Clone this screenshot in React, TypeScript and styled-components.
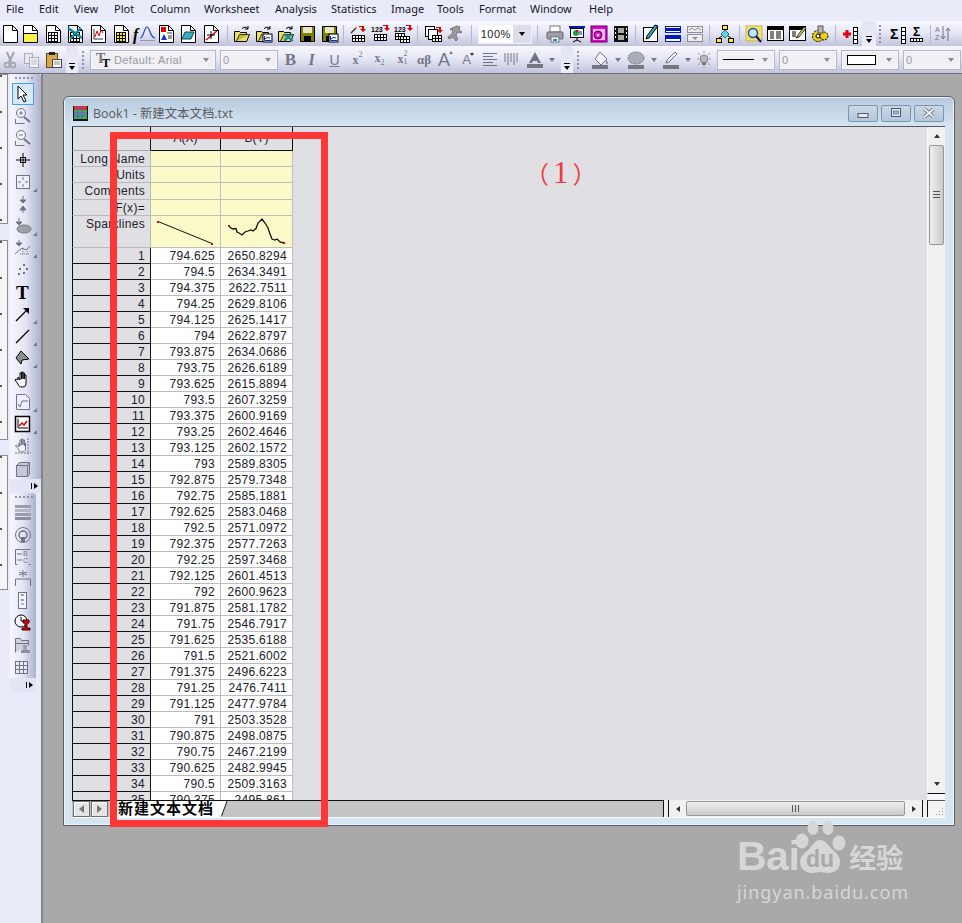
import React from "react";
import styled, { createGlobalStyle } from "styled-components";

const GlobalStyle = createGlobalStyle`
  html, body { margin: 0; padding: 0; background: #a9a9a9; }
  #root { width: 962px; height: 923px; overflow: hidden; }
  * { box-sizing: border-box; }
`;

const Page = styled.div`
  position: relative;
  width: 962px;
  height: 923px;
  display: flex;
  flex-direction: column;
  font-family: "Liberation Sans", "Noto Sans CJK SC", sans-serif;
  overflow: hidden;
`;

/* ---------- small svg helpers ---------- */
const Cells = ({ x, y, c, r, s = 3, fill = "#fff", line = "#000" }: any) => {
  const w = c * (s + 1);
  const h = r * (s + 1);
  let d = "";
  for (let i = 0; i <= c; i++) d += `M${x + i * (s + 1) + 0.5} ${y}v${h + 1}`;
  for (let i = 0; i <= r; i++) d += `M${x} ${y + i * (s + 1) + 0.5}h${w + 1}`;
  return (
    <>
      <rect x={x} y={y} width={w} height={h} fill={fill} />
      <path d={d} stroke={line} fill="none" />
    </>
  );
};
const Sheet = ({ children }: any) => (
  <>
    <path d="M1.5 .5h9l5 5v12h-14z" fill="#fff" stroke="#000" />
    <path d="M10.5 .5v5h5" fill="none" stroke="#000" />
    {children}
  </>
);
const Folder = ({ children }: any) => (
  <>
    <path d="M1.5 6.5v10h12l3-7h-3v-2h-6l-1-1z" fill="#e8e06a" stroke="#000" />
    <path d="M3.5 16l3-6.5h10" fill="#c8b838" stroke="#333" />
    <path d="M9 3.5q3-3 6 0M15 1v3h-3" fill="none" stroke="#000" />
    {children}
  </>
);
const Floppy = ({ children }: any) => (
  <>
    <path d="M1.5 1.5h14v15h-14z" fill="#808000" stroke="#000" />
    <rect x="4" y="2" width="9" height="6" fill="#e8e8c8" />
    <rect x="5" y="11" width="7" height="5" fill="#000" />
    {children}
  </>
);
const Bars = ({ x = 12 }: any) => <Cells x={x} y={2} c={1} r={4} s={3} />;
const Xmark = () => (
  <path d="M1 3l14 10M14 3L3 14" stroke="#108a9e" strokeWidth="2.4" fill="none" />
);
const Grp = ({ x = 8, y = 9 }: any) => (
  <>
    <rect x={x} y={y} width={9} height={8} fill="#fff" stroke="#000" />
    <path d={`M${x + 1.5} ${y + 2}v4.5h6.5`} stroke="#0030c0" fill="none" />
    <path d={`M${x + 2} ${y + 5}l2-1.5 3 0.5`} stroke="#0030c0" fill="none" />
  </>
);
const RedArrow = ({ x = 11, y = 3 }: any) => (
  <path d={`M${x - 3} ${y}h5v3h2l-3 3-3-3h2v-2h-3z`} fill="#e00000" />
);
const SmallT = styled.text`
  font-family: "Liberation Sans", sans-serif;
`;
const SerifT = styled.text`
  font-family: "Liberation Serif", serif;
`;

const g = "#6e7488";

const icons: Record<string, React.ReactNode> = {
  new: <Sheet />,
  book: <Sheet><rect x="2" y="9" width="13" height="8" fill="#fff04a" /><path d="M2 8.500h13" stroke="#000" /></Sheet>,
  wks: <Sheet><Cells x={3} y={7} c={3} r={3} s={2} /></Sheet>,
  xls: <Sheet><Cells x={3} y={7} c={3} r={3} s={2} /><Xmark /></Sheet>,
  graph: <Sheet><path d="M4 4v10h9" stroke="#333" fill="none" /><path d="M5 12l2-6 2 5 2-6 2 3" stroke="#e00000" fill="none" /></Sheet>,
  matrix: <Sheet><Cells x={3} y={7} c={3} r={3} s={2} fill="#fff000" /></Sheet>,
  fx: (
    <>
      <SerifT x="-2" y="15" fontSize="16" fontStyle="italic" fontWeight="700">f</SerifT>
      <path d="M5 13c4 0 4-11 7-11s3 11 8 11" stroke="#2040d0" strokeWidth="1.2" fill="none" />
      <path d="M5 15.500h15" stroke="#999" />
    </>
  ),
  report: <Sheet><rect x="3" y="2" width="5" height="5" fill="#e00000" /><path d="M3 15l3-6 3 6z" fill="#0040d0" /><path d="M9 8h5M10 11h4M10 13h4" stroke="#333" /></Sheet>,
  note: <Sheet><path d="M5 7h9l-3 7H2z" fill="#38b0c0" stroke="#104858" /></Sheet>,
  layout: <Sheet><path d="M3 15L14 6" stroke="#e00000" strokeWidth="1.5" /><path d="M8 6v8M4 10h8" stroke="#000" /></Sheet>,
  open: <Folder />,
  openT: <Folder><Grp /></Folder>,
  openX: <Folder><path d="M7 9l9 7M15 9l-8 7" stroke="#108a9e" strokeWidth="2.2" /></Folder>,
  save: <Floppy />,
  saveT: <Floppy><Grp /></Floppy>,
  wand: <><path d="M2 8l5-5" stroke="#333" strokeWidth="1.5" /><path d="M6 1l3 2-2 1z" fill="#e8c000" /><RedArrow x={13} y={1} /><Cells x={3} y={10} c={4} r={2} s={2} /></>,
  n123: <><SmallT x="0" y="7" fontSize="7" fontWeight="700">123</SmallT><RedArrow x={15} y={0} /><Cells x={3} y={9} c={4} r={2} s={2} /></>,
  n123m: <><SmallT x="0" y="7" fontSize="7" fontWeight="700">123</SmallT><RedArrow x={15} y={0} /><Cells x={1} y={8} c={3} r={2} s={2} /><Cells x={6} y={11} c={3} r={2} s={2} /></>,
  dup: <><rect x="1.500" y="1.500" width="9" height="10" fill="#fff" stroke="#000" /><rect x="4.500" y="4.500" width="9" height="10" fill="#fff" stroke="#000" /><RedArrow x={15} y={2} /><Cells x={8} y={10} c={3} r={2} s={2} /></>,
  run: <path d="M11 1l3 1-1 3 3 2-1 1-4-1-1 4 2 3-2 2-3-4-4 2-1-2 4-3 1-5-2 1-1-1z" fill="#9a9aa0" stroke="#777" />,
  print: <><rect x="4" y="1" width="10" height="6" fill="#fff" stroke="#777" /><rect x="1" y="7" width="16" height="7" rx="1" fill="#9ba0a8" stroke="#666" /><rect x="5" y="12" width="8" height="5" fill="#fff" stroke="#777" /><rect x="7" y="14" width="4" height="2" fill="#1090d0" /></>,
  present: <><rect x="1" y="1" width="16" height="2" fill="#0018c0" /><rect x="2.500" y="3.500" width="13" height="9" fill="#fff" stroke="#000" /><circle cx="8" cy="8" r="3" fill="#20a040" /><path d="M8 8V5h3z" fill="#e00000" /><path d="M11 9h3M11 7h3" stroke="#0018c0" /><path d="M9 13v2M5 17l4-2 4 2" stroke="#000" fill="none" /></>,
  cam: <><rect x="1" y="1" width="16" height="16" fill="#e000c8" stroke="#600060" /><rect x="3" y="4" width="12" height="11" fill="#f4c0e8" /><circle cx="8" cy="10" r="4" fill="#e000c8" stroke="#600060" /><circle cx="8" cy="10" r="1.500" fill="#fff" /></>,
  film: <><rect x="2" y="1" width="14" height="16" fill="#111" /><rect x="6" y="3" width="6" height="5" fill="#aaa" /><rect x="6" y="10" width="6" height="5" fill="#aaa" /><path d="M3.500 3v12M14.500 3v12" stroke="#fff" strokeDasharray="2 2" /></>,
  pen: <><rect x="1.500" y="2.500" width="14" height="14" fill="#fff" stroke="#000" /><path d="M4 14l3-1 9-12-3-1-8 11z" fill="#28a8c0" stroke="#000" /></>,
  bars: <><rect x="1.500" y="1.500" width="15" height="6" fill="#fff" stroke="#0018c0" /><rect x="1" y="3" width="16" height="3" fill="#0018c0" /><rect x="1.500" y="10.500" width="15" height="6" fill="#fff" stroke="#0018c0" /><rect x="1" y="11" width="16" height="3" fill="#0018c0" /></>,
  barsG: <><rect x="1.500" y="1.500" width="15" height="6" fill="#eee" stroke="#8a8f9a" /><path d="M3 5l3-2 3 2 3-2 3 2" stroke="#8a8f9a" fill="none" /><rect x="1.500" y="9.500" width="15" height="7" fill="#eee" stroke="#8a8f9a" /><path d="M6 12l3 3 3-3z" fill="#8a8f9a" /></>,
  tree: <><rect x="6.500" y=".5" width="5" height="4" fill="#fff000" stroke="#000" /><rect x=".5" y="13.500" width="5" height="4" fill="#fff000" stroke="#000" /><rect x="12.500" y="13.500" width="5" height="4" fill="#fff000" stroke="#000" /><path d="M9 4v2M6 11l-3 2M12 11l3 2" stroke="#000" /><path d="M9 5l4 4-4 4-4-4z" fill="#60d8e8" stroke="#206878" /></>,
  mag: <><rect x="1" y="1" width="16" height="15" fill="#f0e070" stroke="#c8b838" /><circle cx="8" cy="8" r="4.500" fill="#c0e8f0" stroke="#2050a0" strokeWidth="1.400" /><path d="M11 11l5 6" stroke="#101080" strokeWidth="2" /></>,
  table: <><rect x=".5" y="1.500" width="16" height="14" fill="#fff" stroke="#000" /><rect x="1" y="2" width="15" height="3" fill="#000" /><path d="M3 7h4M9 7h5M3 9h4M9 9h5M3 11h4M9 11h5M3 13h4M9 13h5" stroke="#000" /></>,
  tablePen: <><rect x=".5" y="1.500" width="16" height="14" fill="#fff" stroke="#000" /><rect x="1" y="2" width="15" height="3" fill="#000" /><path d="M3 7h4M3 9h4M3 11h4" stroke="#000" /><path d="M7 13l2-3 6-8 2 1-7 9z" fill="#e8d040" stroke="#333" /></>,
  gear: <><circle cx="7" cy="11" r="5.500" fill="#e8d020" stroke="#000" strokeDasharray="2 1" /><circle cx="7" cy="11" r="2" fill="#fff" stroke="#000" /><circle cx="13" cy="11" r="4" fill="#e8d020" stroke="#000" strokeDasharray="2 1" /><rect x="7" y="1" width="5" height="7" fill="#b8b8b8" stroke="#555" /></>,
  plusBars: <><path d="M1 9h8M5 5v8" stroke="#e00010" strokeWidth="3" /><Bars x={11} /></>,
  sigmaBars: <><SmallT x="0" y="14" fontSize="14" fontWeight="700">Σ</SmallT><Bars x={11} /></>,
  sigmaLine: <><SmallT x="4" y="11" fontSize="12" fontWeight="700">Σ</SmallT><Cells x={1} y={13} c={4} r={1} s={2} /></>,
  sort: <><SmallT x="1" y="7" fontSize="7" fill={g}>A</SmallT><SmallT x="1" y="15" fontSize="7" fill={g}>Z</SmallT><path d="M9 1v13M7 11l2 3 2-3" stroke={g} fill="none" /><path d="M14 16V3M12 6l2-3 2 3" stroke={g} fill="none" /></>,
  cut: <><path d="M5 1l4 10M12 1L7 11" stroke="#a0a3ae" strokeWidth="2" /><circle cx="5" cy="14" r="2.500" fill="none" stroke="#a0a3ae" strokeWidth="1.500" /><circle cx="11" cy="14" r="2.500" fill="none" stroke="#a0a3ae" strokeWidth="1.500" /></>,
  copy: <><rect x="1.500" y="2.500" width="8" height="10" fill="#e6e7ef" stroke="#a8abb8" /><rect x="6.500" y="6.500" width="9" height="10" fill="#f2f3f8" stroke="#a8abb8" /><path d="M8 9h6M8 11h6M8 13h6" stroke="#b8bac6" /></>,
  paste: <><rect x="1.500" y="2.500" width="11" height="14" fill="#d8a848" stroke="#5a4a28" /><rect x="4" y="1" width="6" height="3" fill="#222" /><rect x="7.500" y="8.500" width="9" height="8" fill="#fff" stroke="#445" /><path d="M9 11h6M9 13h6" stroke="#889" /></>,
  fontT: <><SerifT x="0" y="12" fontSize="14" fontWeight="700" fill="#777">T</SerifT><SerifT x="6" y="16" fontSize="12" fontWeight="700" fill="#000">T</SerifT></>,
  alignL: <path d="M1 2.500h14M1 5.500h10M1 8.500h14M1 11.500h10M1 14.500h14" stroke={g} fill="none" />,
  colL: <path d="M2 2v9M5 2v12M8 2v9M11 2v12M14 2v9" stroke={g} fill="none" />,
  fontCol: <><path d="M8 1l6 11h-3l-1-2H6l-1 2H2z" fill={g} /><rect x="0" y="13" width="16" height="4" fill="#77777f" /></>,
  bucket: <><path d="M8 1l7 7-6 6-6-6z" fill="#f4f4f8" stroke={g} /><path d="M14 9c2 2 2 4 1 4s-1-2-1-4z" fill={g} /><rect x="0" y="14" width="16" height="4" fill="#77777f" /></>,
  palette: <><ellipse cx="8" cy="7" rx="8" ry="6" fill="#a8acb8" stroke="#777" strokeDasharray="2 1" /><rect x="0" y="14" width="16" height="4" fill="#77777f" /></>,
  pencil: <><path d="M3 12l1-3 8-8 2 2-8 8z" fill="#eee" stroke={g} /><rect x="0" y="14" width="16" height="4" fill="#77777f" /></>,
  bulb: <><circle cx="9" cy="8" r="4" fill="#b4b6c2" stroke="#888" /><rect x="7" y="11" width="4" height="3" fill="#777" /><path d="M9 0v2M2 8h2M14 8h2M3 2l2 2M15 2l-2 2M3 14l2-2M15 14l-2-2M9 15v2" stroke="#999" /></>,
  /* left tools */
  pointer: <path d="M4 1v13l3-3 3 6 2-1-3-6h4z" fill="#fff" stroke="#000" />,
  zoomIn: <><circle cx="7" cy="6" r="4.500" fill="#f2f3fb" stroke={g} /><path d="M5 6h4M7 4v4" stroke={g} /><path d="M10 10l6 5" stroke={g} strokeWidth="2" /><path d="M1.500 12v4.500h9" stroke={g} fill="none" /></>,
  zoomOut: <><circle cx="7" cy="6" r="4.500" fill="#f2f3fb" stroke={g} /><path d="M5 6h4" stroke={g} /><path d="M10 10l6 5" stroke={g} strokeWidth="2" /><path d="M1.500 12v4.500h9" stroke={g} fill="none" /></>,
  cross: <><path d="M9 2v14M2 9h14" stroke="#000" /><rect x="6.500" y="6.500" width="5" height="5" fill="none" stroke="#000" /></>,
  gridBox: <><rect x="2.500" y="2.500" width="13" height="13" fill="#eef" stroke={g} /><path d="M9 4v3M9 11v3M4 9h3M11 9h3" stroke={g} /></>,
  arrowsV: <path d="M9 1v4M6 5h6l-3 3zM6 15h6l-3-4zM9 15v3" stroke={g} fill={g} />,
  mask: <><path d="M5 1v4M2 5h6L5 8z" stroke={g} fill={g} /><ellipse cx="10" cy="12" rx="7" ry="4" fill="#9da1ac" stroke="#777" /></>,
  maskLine: <><path d="M5 1v3M2 4h6L5 7z" stroke={g} fill={g} /><path d="M1 15l7-6 4 2 4-4" stroke={g} fill="none" /><path d="M6 15h10M9 10v5M13 10v5" stroke={g} strokeDasharray="1 1" /></>,
  dots: <><rect x="9" y="3" width="2" height="2" fill={g} /><rect x="5" y="7" width="2" height="2" fill={g} /><rect x="12" y="7" width="2" height="2" fill={g} /><rect x="4" y="12" width="2" height="2" fill={g} /><rect x="9" y="11" width="2" height="2" fill={g} /></>,
  T: <SerifT x="2" y="16" fontSize="19" fontWeight="700">T</SerifT>,
  arrow: <><path d="M2 16L13 5" stroke="#000" strokeWidth="1.300" /><path d="M9 3h6v6z" fill="#000" /></>,
  line: <path d="M2 16L15 3" stroke="#000" strokeWidth="1.300" />,
  poly: <path d="M7 2l8 8-7 1-1 4-5-6z" fill="#8c8e92" stroke="#000" />,
  hand: <path d="M4 9V6l2 3V2h1.500v6V1H9v7V2h1.500v6V4H12v8c0 3-1 4-4 4s-3-1-4-3l-3-4 1-1z" fill="#fff" stroke="#000" />,
  sqrt: <><path d="M2.500 1.500h9l4 4v11h-13z" fill="#eef" stroke={g} /><path d="M4 11l2 3 2-6h6" stroke={g} fill="none" /></>,
  graphP: <><rect x="1.500" y="1.500" width="14" height="15" fill="#fff" stroke="#000" strokeWidth="1.500" /><path d="M4 4v9h10" stroke="#000" fill="none" /><path d="M5 11l3-3 2 2 3-4" stroke="#e00000" strokeWidth="1.500" fill="none" /></>,
  handG: <><path d="M5 10V6l1 3V3h1.500v5V2H9v6V3h1.500v6l1-3v6c0 2-2 3-4 3s-3-2-3-3l-3-3 1-1z" fill="#f2f3fb" stroke={g} /><path d="M14 1v16M1 16h16" stroke={g} strokeDasharray="2 1" /></>,
  box3d: <path d="M2.500 6.500l3-3h10v12l-2 2h-11zM2.500 6.500h11v11M13.500 6.500l2-3" fill="#c6c8d6" stroke={g} />,
  stack: <><rect x="1" y="1" width="16" height="3" fill="#9a9eb0" /><rect x="1" y="5" width="16" height="3" fill="#b4b8c6" /><rect x="1" y="9" width="16" height="3" fill="#9a9eb0" /><rect x="1" y="13" width="16" height="3" fill="#8a8ea0" /></>,
  ring: <><circle cx="9" cy="9" r="7.500" fill="none" stroke={g} /><circle cx="9" cy="9" r="4" fill="none" stroke={g} strokeWidth="1.500" /><rect x="7" y="11" width="4" height="5" fill={g} /></>,
  legend: <><path d="M1.500 16.500v-15h15M1.500 16.500h2M16.500 16.500h-2" stroke={g} fill="none" /><SmallT x="9" y="8" fontSize="7" fill={g}>B</SmallT><SmallT x="9" y="15" fontSize="7" fill={g}>C</SmallT><path d="M3 6h5M3 12h5" stroke={g} /></>,
  star: <><path d="M9 0v7M5 2l8 3M13 2L5 5" stroke={g} /><path d="M1.500 16v-7h15v7" fill="none" stroke={g} /></>,
  ruler: <><rect x="4.500" y=".5" width="8" height="16" fill="#f2f3fb" stroke={g} /><path d="M7 3h3M8 2v2M7 8h3M8 7v2M7 12h3" stroke={g} /></>,
  clock: <><circle cx="7" cy="7" r="6" fill="#fff" stroke="#000" /><path d="M7 3v4h3" stroke="#000" fill="none" /><path d="M9 6h6v3h-2v5h3v2H8v-2h3V9H9z" fill="#e00010" stroke="#400" /></>,
  folderS: <><path d="M1.500 16.500v-14h5l1 2h7v5" fill="#d0d2de" stroke={g} /><path d="M1.500 7.500h13" stroke={g} /><rect x="9" y="9" width="4" height="5" fill="#9a9eb0" /><rect x="7" y="14" width="9" height="3" fill="#8a8ea0" /></>,
  tableG: <Cells x={1} y={3} c={3} r={3} s={3} fill="#e8e9f4" line={g} />,
};

const IconSvg = styled.svg`
  display: block;
  overflow: visible;
`;
const Icon = ({ name, w = 18, h = 18 }: { name: string; w?: number; h?: number }) => (
  <IconSvg width={w} height={h} viewBox={`0 0 ${w} ${h}`}>
    {icons[name]}
  </IconSvg>
);

/* ---------- menu ---------- */
const menu: [string, number][] = [
  ["File", 33], ["Edit", 35], ["View", 40], ["Plot", 36], ["Column", 54], ["Worksheet", 71], ["Analysis", 56],
  ["Statistics", 60], ["Image", 46], ["Tools", 42], ["Format", 51], ["Window", 59], ["Help", 30],
];
const MenuBar = styled.div`
  height: 21px;
  flex: none;
  display: flex;
  align-items: center;
  padding: 0 0 4px 6px;
  background: #eaebf9;
`;
const MenuItem = styled.div<{ $w: number }>`
  width: ${(p) => p.$w}px;
  font-family: "Noto Sans", sans-serif;
  font-size: 11px;
  color: #15152a;
  white-space: nowrap;
`;

/* ---------- toolbars ---------- */
const ToolRow = styled.div<{ $h: number }>`
  height: ${(p) => p.$h}px;
  flex: none;
  display: flex;
  align-items: center;
  background: linear-gradient(#f7f8fe 0%, #e6e7f5 45%, #c2c4dc 100%);
`;
const Tool = styled.div<{ $w?: number }>`
  width: ${(p) => p.$w ?? 22}px;
  height: 100%;
  flex: none;
  display: flex;
  align-items: center;
  justify-content: center;
`;
const Sep = styled.div<{ $w: number }>`
  width: ${(p) => p.$w}px;
  flex: none;
  height: 18px;
  display: flex;
  justify-content: center;
  &::after {
    content: "";
    width: 1px;
    background: #b6b8cf;
  }
`;
const Handle = styled.div<{ $w: number }>`
  width: ${(p) => p.$w}px;
  height: 100%;
  flex: none;
  position: relative;
  background: linear-gradient(#e2e3f4, #eceefb);
  border-radius: 0 4px 0 0;
  &::before {
    content: "";
    position: absolute;
    left: 50%;
    bottom: 3px;
    margin-left: -3px;
    border: 3px solid transparent;
    border-top: 4px solid #000;
    border-bottom: 0;
  }
  &::after {
    content: "";
    position: absolute;
    left: 50%;
    bottom: 9px;
    margin-left: -3px;
    width: 6px;
    height: 1px;
    background: #000;
  }
`;
const Grip = styled.div<{ $w: number }>`
  width: ${(p) => p.$w}px;
  flex: none;
  height: 18px;
  display: flex;
  justify-content: center;
  &::after {
    content: "";
    width: 2px;
    background: repeating-linear-gradient(#8f92ad 0 2px, transparent 2px 4px);
  }
`;
const Combo = styled.div<{ $w: number; $light?: boolean }>`
  width: ${(p) => p.$w}px;
  height: 20px;
  flex: none;
  display: flex;
  align-items: center;
  border: 1px solid ${(p) => (p.$light ? "#eef0fa" : "#b4b5c4")};
  background: ${(p) => (p.$light ? "#fff" : "#efeff4")};
  box-shadow: inset 0 0 0 1px ${(p) => (p.$light ? "#fff" : "#f8f8fc")};
  font-size: 11px;
  letter-spacing: 0.4px;
  color: ${(p) => (p.$light ? "#222" : "#9a9aa6")};
  padding-left: 2px;
  position: relative;
`;
const ComboText = styled.span`
  flex: 1;
  white-space: nowrap;
  overflow: hidden;
  display: flex;
  align-items: center;
`;
const ComboArrow = styled.div<{ $dark?: boolean }>`
  width: 18px;
  height: 100%;
  flex: none;
  display: flex;
  align-items: center;
  justify-content: center;
  background: ${(p) => (p.$dark ? "#dcdde6" : "transparent")};
  &::after {
    content: "";
    border: 3px solid transparent;
    border-top: 4px solid ${(p) => (p.$dark ? "#000" : "#8a8a94")};
    border-bottom: 0;
  }
`;
const Drop = styled.div`
  width: 14px;
  flex: none;
  display: flex;
  justify-content: center;
  &::after {
    content: "";
    border: 3px solid transparent;
    border-top: 4px solid #77798a;
    border-bottom: 0;
  }
`;
const Glyph = styled.span<{ $serif?: boolean; $size?: number; $italic?: boolean; $under?: boolean; $thin?: boolean }>`
  display: inline-flex;
  align-items: flex-start;
  font-family: ${(p) => (p.$serif ? '"Liberation Serif", serif' : '"Liberation Sans", sans-serif')};
  font-size: ${(p) => p.$size ?? 14}px;
  font-weight: ${(p) => (p.$thin ? 400 : 700)};
  font-style: ${(p) => (p.$italic ? "italic" : "normal")};
  text-decoration: ${(p) => (p.$under ? "underline" : "none")};
  color: #74778a;
  line-height: 1;
  white-space: nowrap;
  position: relative;
`;
const Script = styled.span<{ $low?: boolean }>`
  font-size: 8px;
  font-weight: 400;
  line-height: 1;
  margin-top: ${(p) => (p.$low ? "7px" : "-3px")};
`;
const ScriptStack = styled.span`
  display: inline-flex;
  flex-direction: column;
  font-size: 8px;
  font-weight: 400;
  line-height: 8px;
  margin-top: -3px;
`;
const Caret = styled.span<{ $down?: boolean }>`
  margin-left: -1px;
  border: 2.5px solid transparent;
  ${(p) => (p.$down ? "border-top: 3px solid #333; border-bottom: 0;" : "border-bottom: 3px solid #74778a; border-top: 0;")}
`;
const LineSample = styled.div`
  flex: 1;
  height: 1px;
  margin: 0 2px 0 3px;
  background: #000;
`;
const BoxSample = styled.div`
  flex: 1;
  height: 10px;
  margin: 0 4px 0 3px;
  border: 1px solid #000;
  background: #fff;
`;
const Spacer = styled.div<{ $w: number }>`
  width: ${(p) => p.$w}px;
  flex: none;
`;

const row1a = ["new", "book", "wks", "xls", "graph", "matrix", "fx", "report", "note", "layout"];

/* ---------- body ---------- */
const Body = styled.div`
  flex: 1;
  display: flex;
  min-height: 0;
  border-top: 1px solid #6c6c78;
`;
const Dock = styled.div`
  width: 43px;
  flex: none;
  display: flex;
  background: #eaebf9;
  border-right: 2px solid #85858c;
`;
const StubColumn = styled.div`
  width: 10px;
  flex: none;
  display: flex;
  flex-direction: column;
`;
const Stub = styled.div<{ $h: number; $gap: number }>`
  height: ${(p) => p.$h}px;
  margin-bottom: ${(p) => p.$gap}px;
  width: 8px;
  background: repeating-linear-gradient(#555 0 2px, #f4f4f6 2px 36px);
  background-size: 2px 100%;
  background-repeat: no-repeat;
  background-color: #f4f4f6;
  border-right: 1px solid #8c8c98;
  border-bottom: 1px solid #8c8c98;
  border-top: 1px solid #8c8c98;
`;
const VBarColumn = styled.div`
  flex: 1;
  display: flex;
  flex-direction: column;
  align-items: flex-start;
`;
const VBar = styled.div<{ $w: number }>`
  width: ${(p) => p.$w}px;
  display: flex;
  flex-direction: column;
  align-items: flex-start;
  background: linear-gradient(90deg, #f6f7fe 0%, #e4e5f4 50%, #aeb0cc 100%);
  border-radius: 3px 3px 0 0;
  padding-left: 2px;
`;
const VGrip = styled.div`
  height: 9px;
  width: 18px;
  margin-left: 3px;
  flex: none;
  background: repeating-linear-gradient(90deg, #9093ae 0 2px, transparent 2px 4px) 0 3px / 100% 2px no-repeat;
`;
const VTool = styled.div<{ $active?: boolean; $corner?: boolean }>`
  width: 22px;
  height: 22px;
  flex: none;
  display: flex;
  align-items: center;
  justify-content: center;
  position: relative;
  ${(p) => (p.$active ? "background:#d6e9fb;border:1px solid #4a9cf0;" : "")}
  ${(p) =>
    p.$corner
      ? `&::after{content:"";position:absolute;right:-3px;bottom:1px;border-style:solid;border-width:0 0 4px 4px;border-color:transparent transparent #73758a transparent;}`
      : ""}
`;
const VHandle = styled.div<{ $w: number; $h: number }>`
  width: ${(p) => p.$w}px;
  height: ${(p) => p.$h}px;
  flex: none;
  position: relative;
  background: linear-gradient(90deg, #e6e7f6, #e0e2f2);
  border-radius: 0 0 4px 4px;
  &::after {
    content: "";
    position: absolute;
    right: 3px;
    top: 50%;
    margin-top: -3px;
    border: 3px solid transparent;
    border-left: 4px solid #000;
    border-right: 0;
  }
  &::before {
    content: "";
    position: absolute;
    right: 9px;
    top: 50%;
    margin-top: -3px;
    width: 1px;
    height: 6px;
    background: #000;
  }
`;
const Mdi = styled.div`
  flex: 1;
  background: #a9a9a9;
  padding: 22px 0 0 20px;
`;

/* ---------- workbook window ---------- */
const Win = styled.div`
  width: 892px;
  height: 730px;
  display: flex;
  flex-direction: column;
  border: 1px solid #5a5f66;
  border-radius: 6px 6px 0 0;
  background: linear-gradient(#b6c9dc 0, #d6e5f3 30px, #d6e5f3 100%);
  box-shadow: inset 0 0 0 1px #eef4fa;
  padding: 0 9px 7px 8px;
`;
const TitleBar = styled.div`
  height: 29px;
  flex: none;
  display: flex;
  align-items: center;
  padding: 3px 0 0 1px;
`;
const TitleIcon = styled.svg`
  flex: none;
`;
const TitleText = styled.div`
  flex: 1;
  margin-left: 4px;
  font-family: "Open Sans", "Noto Sans CJK SC", sans-serif;
  font-size: 12.4px;
  color: #5a5a62;
  white-space: nowrap;
`;
const WinButtons = styled.div`
  display: flex;
  gap: 3px;
  margin-right: 1px;
`;
const WinButton = styled.div`
  width: 30px;
  height: 17px;
  display: flex;
  align-items: center;
  justify-content: center;
  border: 1px solid #7f94ae;
  border-radius: 2px;
  background: linear-gradient(#c8d8e8, #b4c8dc);
`;
const Client = styled.div`
  flex: 1;
  display: flex;
  flex-direction: column;
  min-height: 0;
  border-top: 1px solid #55585e;
  border-bottom: 1px solid #fff;
`;
const Upper = styled.div`
  flex: 1;
  display: flex;
  min-height: 0;
`;
const GridArea = styled.div`
  flex: 1;
  background: #e0dfe4;
  overflow: hidden;
`;
const Row = styled.div<{ $h: number }>`
  height: ${(p) => p.$h}px;
  display: flex;
`;
const LabelCell = styled.div<{ $dark?: boolean; $top?: boolean }>`
  width: 79px;
  flex: none;
  font-size: 12px;
  letter-spacing: 0.3px;
  color: #20202c;
  text-align: right;
  padding: 1px 5px 0 0;
  line-height: ${(p) => (p.$top ? "14px" : "15px")};
  background: #e0dfe4;
  border-left: 1px solid #111;
  border-right: 1px solid ${(p) => (p.$dark ? "#111" : "#b9b9bd")};
  border-bottom: 1px solid ${(p) => (p.$dark ? "#111" : "#b9b9bd")};
`;
const HeadCell = styled.div<{ $w: number }>`
  width: ${(p) => p.$w}px;
  flex: none;
  font-size: 12px;
  color: #20202c;
  text-align: center;
  line-height: 23px;
  background: #e0dfe4;
  border-right: 1px solid #111;
  border-bottom: 1px solid #111;
`;
const LabelHead = styled(LabelCell)`
  border-right-color: #111;
  border-bottom-color: #a8a8ac;
`;
const MetaCell = styled.div<{ $w: number }>`
  width: ${(p) => p.$w}px;
  flex: none;
  background: #fafac8;
  border-right: 1px solid #bdbdbd;
  border-bottom: 1px solid #bdbdbd;
`;
const ValueCell = styled.div<{ $w: number }>`
  width: ${(p) => p.$w}px;
  flex: none;
  background: #fff;
  font-size: 12px;
  letter-spacing: 0.3px;
  color: #20202c;
  text-align: right;
  line-height: 15px;
  padding: 1px 5px 0 0;
  border-right: 1px solid #bdbdbd;
  border-bottom: 1px solid #bdbdbd;
`;
const VScroll = styled.div`
  width: 18px;
  flex: none;
  display: flex;
  flex-direction: column;
  background: #f6f6f8;
`;
const VTrack = styled.div`
  flex: 1;
  display: flex;
  flex-direction: column;
  align-items: center;
  background: #f0f0f0;
  border-bottom: 1px solid #111;
  border-left: 1px solid #f8f8f8;
`;
const ArrowBtn = styled.div<{ $dir: "up" | "down" | "left" | "right" }>`
  flex: none;
  width: ${(p) => (p.$dir === "up" || p.$dir === "down" ? "100%" : "17px")};
  height: ${(p) => (p.$dir === "up" || p.$dir === "down" ? "18px" : "100%")};
  display: flex;
  align-items: center;
  justify-content: center;
  &::after {
    content: "";
    border: 3px solid transparent;
    ${(p) =>
      p.$dir === "up"
        ? "border-bottom:4px solid #333;border-top:0;"
        : p.$dir === "down"
        ? "border-top:4px solid #333;border-bottom:0;"
        : p.$dir === "left"
        ? "border-right:4px solid #333;border-left:0;"
        : "border-left:4px solid #333;border-right:0;"}
  }
`;
const VThumb = styled.div`
  width: 15px;
  height: 100px;
  flex: none;
  display: flex;
  align-items: center;
  justify-content: center;
  border: 1px solid #979797;
  border-radius: 2px;
  background: linear-gradient(90deg, #eeeeee, #d6d6d6 70%, #c8c8c8);
  &::after {
    content: "";
    width: 7px;
    height: 8px;
    background: repeating-linear-gradient(#555 0 1px, transparent 1px 3px);
  }
`;
const VFill = styled.div`
  flex: 1;
`;
const VGapFoot = styled.div`
  height: 6px;
  flex: none;
  background: #f6f6f8;
`;
const Lower = styled.div`
  height: 17px;
  flex: none;
  display: flex;
  background: #f0f0f0;
`;
const TabStrip = styled.div`
  width: 592px;
  flex: none;
  display: flex;
  background: #c4c4c4;
  border-top: 1px solid #111;
  border-right: 1px solid #111;
  overflow: hidden;
`;
const TabNav = styled.div`
  display: flex;
  gap: 1px;
  margin: 0 2px 0 1px;
  height: 100%;
`;
const TabBtn = styled.div<{ $dir: "left" | "right" }>`
  width: 17px;
  height: 100%;
  display: flex;
  align-items: center;
  justify-content: center;
  background: #e4e4e4;
  border: 1px solid #6e6e6e;
  box-shadow: inset 1px 1px 0 #fff;
  &::after {
    content: "";
    border: 4px solid transparent;
    ${(p) =>
      p.$dir === "left"
        ? "border-right:5px solid #777;border-left:0;"
        : "border-left:5px solid #777;border-right:0;"}
  }
`;
const Tab = styled.div`
  position: relative;
  width: 110px;
  flex: none;
  margin-top: -1px;
  height: 17px;
  background: #fff;
  padding-left: 8px;
  font-family: "Noto Sans CJK SC", sans-serif;
  font-size: 15px;
  font-weight: 700;
  line-height: 16px;
  letter-spacing: 1px;
  color: #000;
  white-space: nowrap;
  &::after {
    content: "";
    position: absolute;
    right: -5px;
    top: 0;
    width: 6px;
    height: 16px;
    background: #fff;
    border-right: 1px solid #111;
    transform: skewX(-20deg);
  }
`;
const HScroll = styled.div`
  flex: 1;
  display: flex;
  align-items: center;
  margin-left: 4px;
  border-left: 1px solid #111;
  border-right: 1px solid #111;
  background: #f0f0f0;
  height: 100%;
`;
const HThumb = styled.div`
  flex: 1;
  height: 15px;
  display: flex;
  align-items: center;
  justify-content: center;
  border: 1px solid #979797;
  border-radius: 2px;
  background: linear-gradient(#eeeeee, #d6d6d6 70%, #c8c8c8);
  &::after {
    content: "";
    width: 8px;
    height: 7px;
    background: repeating-linear-gradient(90deg, #555 0 1px, transparent 1px 3px);
  }
`;
const Corner = styled.div`
  width: 18px;
  flex: none;
  margin-left: 4px;
  border-left: 1px solid #111;
  border-top: 1px solid #555;
  background: #f4f4f4;
  position: relative;
  &::after {
    content: "";
    position: absolute;
    right: 2px;
    bottom: 2px;
    width: 8px;
    height: 8px;
    background: radial-gradient(circle, #999 0 1px, transparent 1px) 0 0 / 3px 3px;
    clip-path: polygon(100% 0, 100% 100%, 0 100%);
  }
`;

/* ---------- annotations over the screenshot ---------- */
const RedFrame = styled.div`
  position: absolute;
  left: 110px;
  top: 132px;
  width: 218px;
  height: 695px;
  border: 7px solid #ff3636;
  pointer-events: none;
`;
const Mark = styled.div`
  position: absolute;
  left: 525px;
  top: 158px;
  font-family: "Liberation Serif", "Noto Sans CJK SC", serif;
  font-size: 24px;
  line-height: 34px;
  color: #f23c3c;
  white-space: nowrap;
`;
const MarkDigit = styled.span`
  font-size: 31px;
  line-height: 0;
  margin: 0 4px;
`;
const Watermark = styled.div`
  position: absolute;
  left: 737px;
  top: 820px;
  width: 174px;
  color: #d6d6d6;
`;
const WmTop = styled.div`
  display: flex;
  align-items: flex-end;
  height: 56px;
`;
const WmBai = styled.span`
  font-size: 41px;
  font-weight: 700;
  line-height: 39px;
  letter-spacing: -0.5px;
`;
const WmCn = styled.span`
  font-family: "Noto Sans CJK SC", sans-serif;
  font-size: 27px;
  font-weight: 700;
  line-height: 38px;
  margin-left: 2px;
  white-space: nowrap;
`;
const WmUrl = styled.div`
  font-family: "Noto Sans", sans-serif;
  font-size: 18px;
  line-height: 24px;
  letter-spacing: 0.95px;
  margin-top: 4px;
  white-space: nowrap;
`;
const PawSvg = styled.svg`
  flex: none;
  margin-left: -4px;
`;
const PawText = styled.text`
  font-family: "Liberation Sans", sans-serif;
  font-size: 23px;
  font-weight: 700;
`;

/* ---------- data ---------- */
const bValues = [
  "2650.8294", "2634.3491", "2622.7511", "2629.8106", "2625.1417", "2622.8797", "2634.0686", "2626.6189", "2615.8894",
  "2607.3259", "2600.9169", "2602.4646", "2602.1572", "2589.8305", "2579.7348", "2585.1881", "2583.0468", "2571.0972",
  "2577.7263", "2597.3468", "2601.4513", "2600.9623", "2581.1782", "2546.7917", "2535.6188", "2521.6002", "2496.6223",
  "2476.7411", "2477.9784", "2503.3528", "2498.0875", "2467.2199", "2482.9945", "2509.3163", "2495.861",
];
const sparkB =
  "8,10 10,12 12,13 15,12.500 16,16 18,17 21,19 24,16 27,15 30,14 32,15 35,12.500 37,7 41,3 44,7 47,12 49,18 51,23 54,24 56,23 59,26 63,27";

const SparkSvg = styled.svg`
  display: block;
`;

const leftA: [string, boolean?][] = [
  ["zoomIn"], ["zoomOut"], ["cross"], ["gridBox", true], ["arrowsV"], ["mask", true], ["maskLine", true], ["dots"], ["T"],
  ["arrow", true], ["line", true], ["poly", true], ["hand"], ["sqrt", true], ["graphP", true], ["handG"], ["box3d"],
];
const leftB = ["stack", "ring", "legend", "star", "ruler", "clock", "folderS", "tableG"];

export default function App() {
  return (
    <Page>
      <GlobalStyle />
      <MenuBar>
        {menu.map(([label, w]) => (
          <MenuItem key={label} $w={w}>{label}</MenuItem>
        ))}
      </MenuBar>

      <ToolRow $h={25}>
        <Spacer $w={1} />
        {row1a.map((n, i) => (
          <Tool key={n} $w={i === 0 ? 19 : 22.6}><Icon name={n} /></Tool>
        ))}
        <Sep $w={8} />
        {["open", "openT", "openX", "save", "saveT"].map((n) => <Tool key={n}><Icon name={n} /></Tool>)}
        <Sep $w={5} />
        {["wand", "n123", "n123m"].map((n) => <Tool key={n} $w={22.5}><Icon name={n} /></Tool>)}
        <Sep $w={8} />
        {["dup", "run"].map((n) => <Tool key={n}><Icon name={n} /></Tool>)}
        <Sep $w={12} />
        <Combo $w={54} $light>
          <ComboText>100%</ComboText>
          <ComboArrow $dark />
        </Combo>
        <Sep $w={12} />
        {["print", "present", "cam", "film"].map((n) => <Tool key={n}><Icon name={n} /></Tool>)}
        <Sep $w={8} />
        {["pen", "bars", "barsG"].map((n) => <Tool key={n}><Icon name={n} /></Tool>)}
        <Sep $w={8} />
        <Tool><Icon name="tree" /></Tool>
        <Sep $w={7} />
        {["mag", "table", "tablePen", "gear"].map((n) => <Tool key={n}><Icon name={n} /></Tool>)}
        <Sep $w={9} />
        <Tool><Icon name="plusBars" /></Tool>
        <Handle $w={14} />
        <Grip $w={8} />
        <Spacer $w={5} />
        <Tool $w={20}><Icon name="sigmaBars" /></Tool>
        <Tool $w={19}><Icon name="sigmaLine" /></Tool>
        <Sep $w={5} />
        <Tool $w={20}><Icon name="sort" /></Tool>
      </ToolRow>

      <ToolRow $h={27}>
        {["cut", "copy", "paste"].map((n, i) => <Tool key={n} $w={i === 0 ? 21 : 22}><Icon name={n} /></Tool>)}
        <Spacer $w={1} />
        <Handle $w={12} />
        <Grip $w={10} />
        <Spacer $w={2} />
        <Combo $w={126}>
          <ComboText>
            <Spacer $w={3} />
            <Icon name="fontT" />
            Default: Arial
          </ComboText>
          <ComboArrow />
        </Combo>
        <Spacer $w={4} />
        <Combo $w={58}><ComboText>0</ComboText><ComboArrow /></Combo>
        <Spacer $w={2} />
        <Tool $w={21}><Glyph $serif $size={17}>B</Glyph></Tool>
        <Tool $w={21}><Glyph $serif $italic $size={16}>I</Glyph></Tool>
        <Tool $w={25}><Glyph $under $thin $size={14}>U</Glyph></Tool>
        <Tool $w={21}><Glyph $serif $size={12}>x<Script>2</Script></Glyph></Tool>
        <Tool $w={23}><Glyph $serif $size={12}>x<Script $low>2</Script></Glyph></Tool>
        <Tool $w={23}>
          <Glyph $serif $size={12}>x<ScriptStack><span>2</span><span>1</span></ScriptStack></Glyph>
        </Tool>
        <Tool $w={20}><Glyph $serif $size={13}>αβ</Glyph></Tool>
        <Tool $w={23}><Glyph $thin $size={18}>A<Caret /></Glyph></Tool>
        <Tool $w={22}><Glyph $thin $size={13}>A<Caret $down /></Glyph></Tool>
        <Tool $w={22}><Icon name="alignL" w={16} h={17} /></Tool>
        <Tool $w={20}><Icon name="colL" w={16} h={17} /></Tool>
        <Spacer $w={4} />
        <Tool $w={20}><Icon name="fontCol" w={16} h={18} /></Tool>
        <Drop />
        <Spacer $w={2} />
        <Handle $w={12} />
        <Grip $w={10} />
        <Spacer $w={6} />
        <Tool $w={22}><Icon name="bucket" w={16} h={18} /></Tool>
        <Drop />
        <Tool $w={22}><Icon name="palette" w={16} h={18} /></Tool>
        <Drop />
        <Tool $w={20}><Icon name="pencil" w={16} h={18} /></Tool>
        <Drop />
        <Tool $w={18}><Icon name="bulb" /></Tool>
        <Spacer $w={4} />
        <Combo $w={58}><LineSample /><ComboArrow /></Combo>
        <Spacer $w={4} />
        <Combo $w={58}><ComboText>0</ComboText><ComboArrow /></Combo>
        <Spacer $w={4} />
        <Combo $w={58}><BoxSample /><ComboArrow /></Combo>
        <Spacer $w={4} />
        <Combo $w={58}><ComboText>0</ComboText><ComboArrow /></Combo>
      </ToolRow>

      <Body>
        <Dock>
          <StubColumn>
            <Stub $h={150} $gap={16} />
            <Stub $h={200} $gap={15} />
            <Stub $h={135} $gap={0} />
          </StubColumn>
          <VBarColumn>
            <VBar $w={31}>
              <VGrip />
              <VTool $active><Icon name="pointer" /></VTool>
              {leftA.map(([n, c]) => (
                <VTool key={n} $corner={c}><Icon name={n} /></VTool>
              ))}
            </VBar>
            <VHandle $w={31} $h={14} />
            <VBar $w={26}>
              <VGrip />
              {leftB.map((n) => (
                <VTool key={n}><Icon name={n} /></VTool>
              ))}
            </VBar>
            <VHandle $w={26} $h={14} />
          </VBarColumn>
        </Dock>

        <Mdi>
          <Win>
            <TitleBar>
              <TitleIcon width="16" height="16" viewBox="0 0 16 16">
                <rect x="0" y="1" width="15" height="15" fill="#111" />
                <rect x="1" y="1" width="13" height="4" fill="#d83030" />
                <rect x="1" y="5" width="13" height="9" fill="#34b848" />
                <path d="M5 1v13M9 1v13M1 8h13M1 11h13" stroke="#7050e0" />
              </TitleIcon>
              <TitleText>Book1 - 新建文本文档.txt</TitleText>
              <WinButtons>
                <WinButton>
                  <svg width="12" height="12" viewBox="0 0 12 12"><rect x="1" y="6.500" width="10" height="4" fill="#e8e8ec" stroke="#4a5a70" /></svg>
                </WinButton>
                <WinButton>
                  <svg width="12" height="12" viewBox="0 0 12 12"><rect x="1.500" y="1.500" width="9" height="8" fill="#dfe7ef" stroke="#4a5a70" /><rect x="3.500" y="4" width="5" height="3" fill="#a8bcd0" stroke="#4a5a70" strokeWidth=".6" /></svg>
                </WinButton>
                <WinButton>
                  <svg width="14" height="12" viewBox="0 0 14 12"><path d="M2.500 2l9 8M11.500 2l-9 8" stroke="#4a5a70" strokeWidth="3.400" /><path d="M2.500 2l9 8M11.500 2l-9 8" stroke="#f4f6f8" strokeWidth="2" /></svg>
                </WinButton>
              </WinButtons>
            </TitleBar>
            <Client>
              <Upper>
                <GridArea>
                  <Row $h={24}>
                    <LabelHead />
                    <HeadCell $w={70}>A(X)</HeadCell>
                    <HeadCell $w={72}>B(Y)</HeadCell>
                  </Row>
                  {[
                    ["Long Name", 16],
                    ["Units", 16],
                    ["Comments", 17],
                    ["F(x)=", 16],
                  ].map(([label, h]) => (
                    <Row key={label as string} $h={h as number}>
                      <LabelCell>{label}</LabelCell>
                      <MetaCell $w={70} />
                      <MetaCell $w={72} />
                    </Row>
                  ))}
                  <Row $h={32}>
                    <LabelCell $top>Sparklines</LabelCell>
                    <MetaCell $w={70}>
                      <SparkSvg width="69" height="31" viewBox="0 0 69 31">
                        <path d="M7 5.500L61 27.500" stroke="#111" />
                        <rect x="6" y="5" width="2" height="2" fill="#e00000" />
                        <rect x="60" y="27" width="2" height="2" fill="#e00000" />
                      </SparkSvg>
                    </MetaCell>
                    <MetaCell $w={72}>
                      <SparkSvg width="71" height="31" viewBox="0 0 71 31">
                        <polyline points={sparkB} stroke="#111" fill="none" strokeWidth="1.300" />
                        <rect x="7" y="9" width="2" height="2" fill="#e00000" />
                        <rect x="62" y="26" width="2" height="2" fill="#e00000" />
                      </SparkSvg>
                    </MetaCell>
                  </Row>
                  {bValues.map((b, i) => (
                    <Row key={i} $h={16}>
                      <LabelCell $dark>{i + 1}</LabelCell>
                      <ValueCell $w={70}>{794.625 - i * 0.125}</ValueCell>
                      <ValueCell $w={72}>{b}</ValueCell>
                    </Row>
                  ))}
                </GridArea>
                <VScroll>
                  <VTrack>
                    <ArrowBtn $dir="up" />
                    <VThumb />
                    <VFill />
                    <ArrowBtn $dir="down" />
                  </VTrack>
                  <VGapFoot />
                </VScroll>
              </Upper>
              <Lower>
                <TabStrip>
                  <TabNav>
                    <TabBtn $dir="left" />
                    <TabBtn $dir="right" />
                  </TabNav>
                  <Tab>新建文本文档</Tab>
                </TabStrip>
                <HScroll>
                  <ArrowBtn $dir="left" />
                  <HThumb />
                  <ArrowBtn $dir="right" />
                </HScroll>
                <Corner />
              </Lower>
            </Client>
          </Win>
        </Mdi>
      </Body>

      <Mark>（<MarkDigit>1</MarkDigit>）</Mark>
      <RedFrame />
      <Watermark>
        <WmTop>
          <WmBai>Bai</WmBai>
          <PawSvg width="52" height="56" viewBox="0 0 52 56">
            <ellipse cx="18" cy="8" rx="5.500" ry="7" fill="#d6d6d6" />
            <ellipse cx="33" cy="8" rx="5.500" ry="7" fill="#d6d6d6" />
            <ellipse cx="7" cy="21" rx="6.500" ry="7.500" fill="#d6d6d6" />
            <ellipse cx="44" cy="23" rx="6.500" ry="7.500" fill="#d6d6d6" />
            <path d="M25 20c6 0 8 6 13 10 5 4 7 8 7 12 0 8-6 11-12 11-3 0-5-1-8-1s-5 1-8 1C11 53 5 49 5 42c0-4 3-8 7-11 5-4 7-11 13-11z" fill="#d6d6d6" />
            <PawText x="25" y="47" textAnchor="middle" fill="#a9a9a9">du</PawText>
          </PawSvg>
          <WmCn>经验</WmCn>
        </WmTop>
        <WmUrl>jingyan.baidu.com</WmUrl>
      </Watermark>
    </Page>
  );
}
